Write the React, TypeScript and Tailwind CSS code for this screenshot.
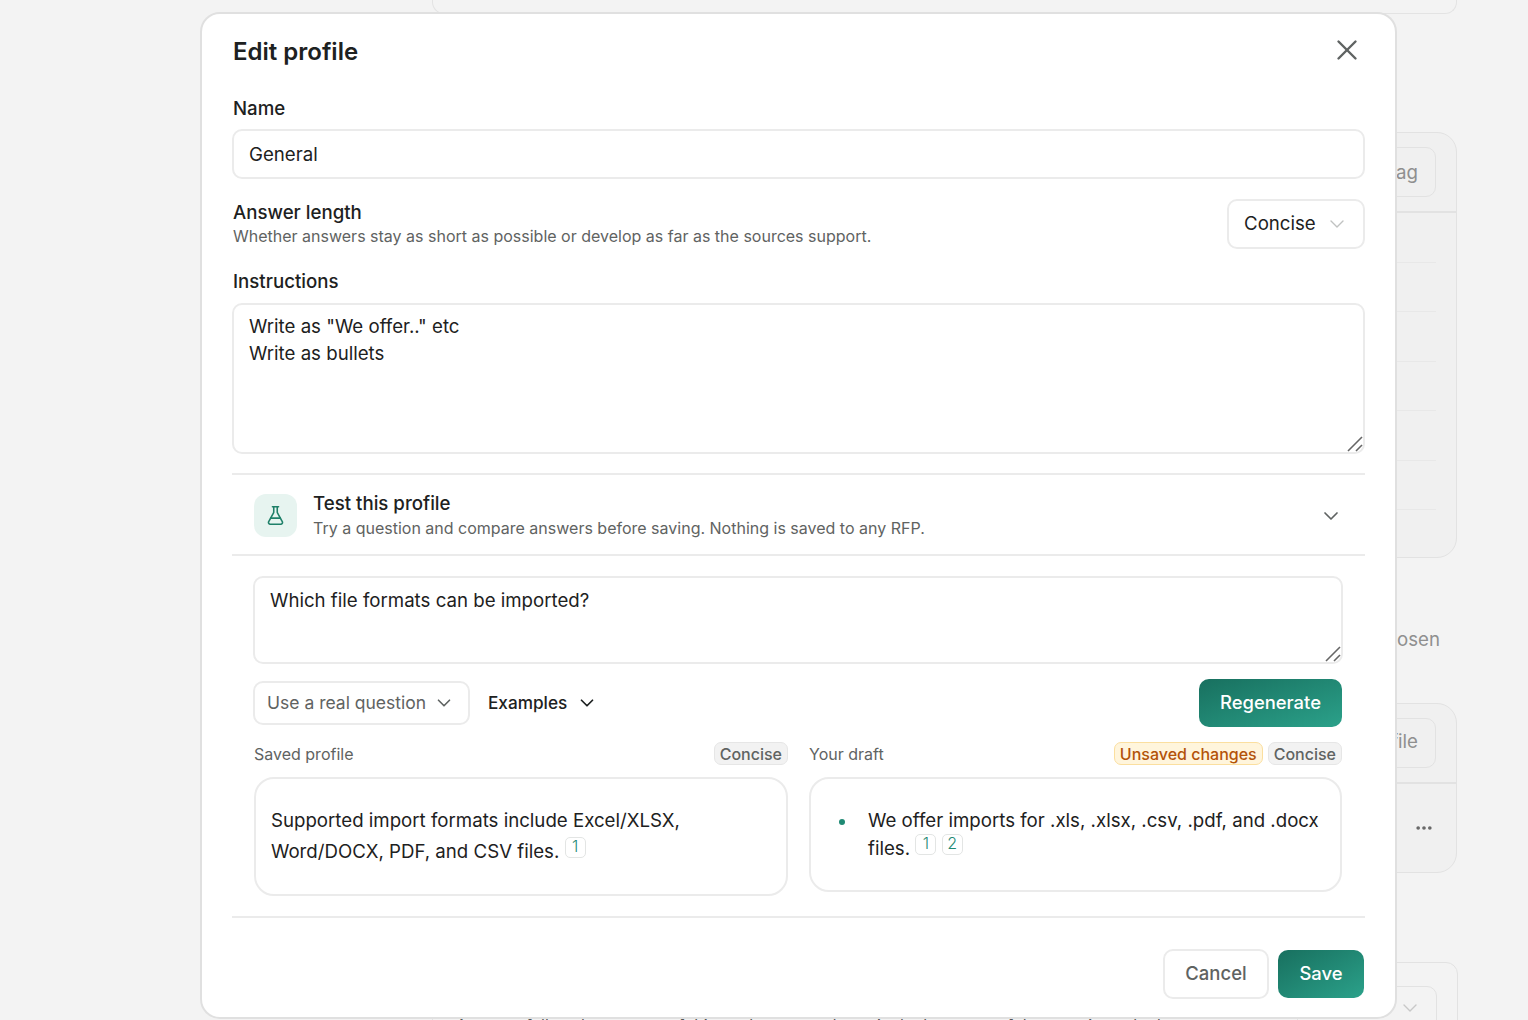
import { X, ChevronDown, FlaskConical, Ellipsis } from 'lucide-react';

function Cita({ n }: { n: number }) {
  return (
    <span className="relative -top-[6px] inline-flex h-[21px] w-[21px] items-center justify-center rounded-[5px] border border-[#e3e5e4] bg-white pb-[2px] text-[16px] font-light leading-none text-[#1f8a74]">
      {n}
    </span>
  );
}

// textarea com alça de resize desenhada por cima
function Area({ valor, className }: { valor: string; className: string }) {
  return (
    <div className="relative">
      <textarea
        readOnly
        defaultValue={valor}
        className={`block w-full resize-none border-2 border-[#ebebeb] text-[18.67px] outline-none ${className}`}
      />
      <svg width="16" height="16" viewBox="0 0 16 16" className="absolute bottom-[2px] right-[2px] text-[#666]" fill="none" stroke="currentColor" strokeWidth="1.6">
        <path d="M1 15 15 1" />
        <path d="M9 15 15 9" />
      </svg>
    </div>
  );
}

function Fundo() {
  const linhas = [0, 1, 2, 3, 4, 5];
  return (
    <div className="ml-[432px] w-[1026px] text-[18.67px] text-[#8f8f8f]">
      <div className="mr-[1px] h-[14px] rounded-b-[12px] border border-t-0 border-[#e3e3e3]" />
      <section className="mr-[1px] mt-[118px] h-[426px] rounded-[20px] border border-[#e2e2e2] bg-[#f0f0f0]">
        <div className="flex h-[80px] items-center justify-end border-b-2 border-[#e2e2e2] pr-[20px]">
          <div className="flex h-[50px] w-[140px] items-center justify-end rounded-[10px] border border-[#e2e2e2] pr-[17px] pt-[1px]">Add tag</div>
        </div>
        {linhas.map((l) => (
          <div key={l} className="mr-[20px] h-[49.5px] border-b border-[#e8e8e8]" />
        ))}
      </section>
      <p className="mr-[1px] mt-[69px] pr-[17px] text-right leading-[25px]">No file chosen</p>
      <section className="mr-[1px] mt-[51px] h-[170px] rounded-[20px] border border-[#e2e2e2] bg-[#f0f0f0]">
        <div className="flex h-[80px] items-center justify-end border-b-2 border-[#e2e2e2] pr-[20px]">
          <div className="flex h-[50px] w-[140px] items-center justify-end rounded-[10px] border border-[#e2e2e2] pb-[2px] pr-[17px]">Upload file</div>
        </div>
        <div className="flex h-[88px] items-center justify-end pr-[22px] text-[#666]">
          <Ellipsis size={20} strokeWidth={2.4} />
        </div>
      </section>
      <section className="mt-[89px] flex h-[100px] items-start justify-between rounded-[12px] border border-[#e2e2e2] pt-[23px]">
        <p className="ml-[23px] mt-[27px] text-[16px] leading-[24px] text-[#555]">Answers follow the sources of this workspace and stay in the language of the question asked</p>
        <div className="mr-[20px] flex h-[60px] w-[140px] items-start justify-end rounded-[10px] border border-[#e2e2e2] pr-[14px] pt-[9px] text-[#c8c8c8]">
          <ChevronDown size={24} strokeWidth={1.4} />
        </div>
      </section>
    </div>
  );
}

export default function App() {
  return (
    <div className="relative h-[1020px] w-[1528px] overflow-hidden bg-[#f3f3f3] font-['Inter',sans-serif] text-[#1d2121]">
      <Fundo />

      <div className="absolute left-[200px] top-[12px] h-[1007px] w-[1197px] rounded-[20px] border-2 border-[#e0e0e0] bg-white px-[30px]">
        <div className="flex h-[82px] items-start justify-between">
          <h1 className="ml-[1px] mt-[21px] text-[24px] font-semibold leading-[34px]">Edit profile</h1>
          <button className="mr-[1px] mt-[19px] text-[#5f6362]">
            <X size={34} strokeWidth={1.7} />
          </button>
        </div>

        <label className="ml-[1px] block text-[18.67px] font-medium leading-[25px]">Name</label>
        <div className="mt-[8px] flex h-[50px] items-center rounded-[10px] border-2 border-[#ebebeb] px-[15px] pt-[2px] text-[18.67px]">General</div>

        <div className="mt-[20px] flex h-[50px] items-start justify-between">
          <div className="ml-[1px]">
            <p className="mt-[1px] text-[18.67px] font-medium leading-[25px]">Answer length</p>
            <p className="-mt-[1px] text-[16px] leading-[24px] text-[#5f6362]">Whether answers stay as short as possible or develop as far as the sources support.</p>
          </div>
          <div className="flex h-[50px] w-[138px] items-center rounded-[10px] border-2 border-[#ebebeb] pl-[15px] text-[18.67px]">
            Concise
            <ChevronDown size={24} strokeWidth={1.4} className="ml-[9px] text-[#c0c2c1]" />
          </div>
        </div>

        <label className="ml-[1px] mt-[20px] block text-[18.67px] font-medium leading-[25px]">Instructions</label>
        <div className="mt-[9px]">
          <Area
            valor={'Write as "We offer.." etc\nWrite as bullets'}
            className="h-[151px] rounded-[10px] px-[15px] py-[8px] leading-[27px]"
          />
        </div>

        <div className="mt-[19px] flex h-[83px] items-center border-y-2 border-[#ebebeb] pl-[22px] pr-[22px] pt-[2px]">
          <div className="flex h-[43px] w-[43px] items-center justify-center rounded-[12px] bg-[#e7f4f0] text-[#1f8069]">
            <FlaskConical size={21} strokeWidth={1.8} />
          </div>
          <div className="ml-[16px] flex-1">
            <p className="text-[18.67px] font-medium leading-[25px]">Test this profile</p>
            <p className="text-[16px] leading-[24px] text-[#5f6362]">Try a question and compare answers before saving. Nothing is saved to any RFP.</p>
          </div>
          <ChevronDown size={24} strokeWidth={1.7} className="text-[#5f6362]" />
        </div>

        <div className="px-[21px]">
          <div className="mt-[20px] w-[1090px]">
            <Area valor="Which file formats can be imported?" className="h-[88px] rounded-[10px] px-[15px] py-[9px] leading-[27px]" />
          </div>

          <div className="mt-[15px] flex h-[48px] items-center">
            <div className="flex h-[44px] w-[217px] items-center rounded-[10px] border-2 border-[#ebebeb] pl-[12px] text-[17.5px] text-[#5f6362]">
              Use a real question
              <ChevronDown size={22} strokeWidth={1.8} className="ml-[7px]" />
            </div>
            <div className="ml-[18px] flex items-center text-[17.2px] font-medium">
              Examples
              <ChevronDown size={22} strokeWidth={1.9} className="ml-[9px]" />
            </div>
            <button className="ml-auto mr-[2px] h-[48px] w-[143px] rounded-[10px] bg-gradient-to-br from-[#18705f] to-[#2ba18a] text-[18.4px] font-medium text-white">Regenerate</button>
          </div>

          <div className="mt-[15px] grid w-[1089px] grid-cols-[534px_533px] gap-x-[21px] pl-[1px]">
            <div>
              <div className="flex h-[23px] items-center justify-between text-[16px] text-[#5f6362]">
                Saved profile
                <span className="flex h-[23px] items-center rounded-[7px] border border-[#e6e6e6] bg-[#f2f2f2] px-[5px] font-medium">Concise</span>
              </div>
              <div className="mt-[12px] h-[119px] rounded-[20px] border-2 border-[#ebebeb] px-[15px] pt-[26px] text-[18.67px] leading-[31px]">
                Supported import formats include Excel/XLSX, Word/DOCX, PDF, and CSV files. <Cita n={1} />
              </div>
            </div>
            <div>
              <div className="flex h-[23px] items-center text-[16px] text-[#5f6362]">
                <span className="mr-auto">Your draft</span>
                <span className="mr-[5px] flex h-[23px] items-center rounded-[7px] border border-[#fbdf9f] bg-[#fff5dc] px-[5px] font-medium text-[#b35309]">Unsaved changes</span>
                <span className="flex h-[23px] items-center rounded-[7px] border border-[#e6e6e6] bg-[#f2f2f2] px-[5px] font-medium">Concise</span>
              </div>
              <div className="mt-[12px] flex h-[115px] rounded-[20px] border-2 border-[#ebebeb] pl-[28px] pr-[14px] pt-[28px] text-[18.67px] leading-[28px]">
                <span className="mr-[23px] mt-[12px] h-[6px] w-[6px] shrink-0 rounded-full bg-[#1f8a74]" />
                <p>We offer imports for .xls, .xlsx, .csv, .pdf, and .docx files. <Cita n={1} /> <Cita n={2} /></p>
              </div>
            </div>
          </div>
        </div>

        <div className="mt-[20px] flex h-[85px] items-center justify-end gap-[9px] border-t-2 border-[#ebebeb] pt-[28px]">
          <button className="h-[50px] w-[106px] rounded-[10px] border-2 border-[#ebebeb] text-[18.5px] font-medium text-[#5f6362]">Cancel</button>
          <button className="mr-[1px] h-[48px] w-[86px] rounded-[10px] bg-gradient-to-br from-[#18705f] to-[#2ba18a] text-[18.4px] font-medium text-white">Save</button>
        </div>
      </div>
    </div>
  );
}
